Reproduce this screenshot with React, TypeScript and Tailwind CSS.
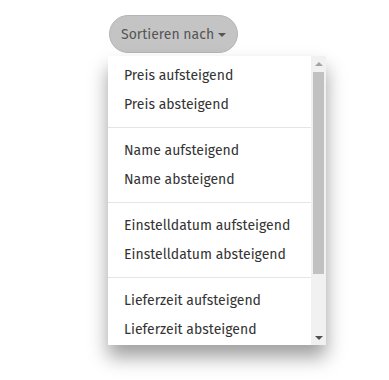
import React from 'react';

const groups: string[][] = [
    ['Preis aufsteigend', 'Preis absteigend'],
    ['Name aufsteigend', 'Name absteigend'],
    ['Einstelldatum aufsteigend', 'Einstelldatum absteigend'],
    ['Lieferzeit aufsteigend', 'Lieferzeit absteigend'],
];

// classic scrollbar, drawn since the headless browser hides the native one
const ScrollBar: React.FC = () => (
    <div className="w-[15px] shrink-0 bg-[#f1f1f1] flex flex-col">
        <div className="h-[15px] flex items-center justify-center">
            <span className="w-0 h-0 border-l-[4px] border-r-[4px] border-b-[4px] border-l-transparent border-r-transparent border-b-[#a3a3a3]" />
        </div>
        <div className="flex-1 pt-[1px] px-[2px]">
            <div className="h-[202px] bg-[#c1c1c1]" />
        </div>
        <div className="h-[15px] flex items-center justify-center">
            <span className="w-0 h-0 border-l-[4px] border-r-[4px] border-t-[4px] border-l-transparent border-r-transparent border-t-[#505050]" />
        </div>
    </div>
);

const SortDropdown: React.FC = () => {
    return (
        <div className="flex flex-col items-start">
            <button className="h-[38px] px-[11px] rounded-full bg-[#c4c4c4] border border-[#b5b5b5] text-[#555] text-[14px] flex items-center gap-[4px]">
                Sortieren nach
                <span className="w-0 h-0 border-l-[4px] border-r-[4px] border-t-[4px] border-l-transparent border-r-transparent border-t-[#555] mt-[1px]" />
            </button>
            <div className="mt-[3px] -ml-[1px] w-[218px] h-[289px] flex bg-white shadow-[0_12px_18px_rgba(0,0,0,0.38)]">
                <div className="flex-1 overflow-hidden pt-[5px]">
                    {groups.map((items, i) => (
                        <div key={i}>
                            {i > 0 && <div className="my-[8px] h-px bg-[#e5e5e5]" />}
                            {items.map(label => (
                                <div key={label} className="h-[29px] px-[16px] flex items-center text-[14px] text-[#333] whitespace-nowrap">
                                    {label}
                                </div>
                            ))}
                        </div>
                    ))}
                </div>
                <ScrollBar />
            </div>
        </div>
    );
};

const App: React.FC = () => {
    return (
        <div className="w-[389px] h-[380px] bg-white pl-[109px] pt-[15px]" style={{ fontFamily: '"Fira Sans", Lato, "Liberation Sans", sans-serif' }}>
            <SortDropdown />
        </div>
    );
};

export default App;
